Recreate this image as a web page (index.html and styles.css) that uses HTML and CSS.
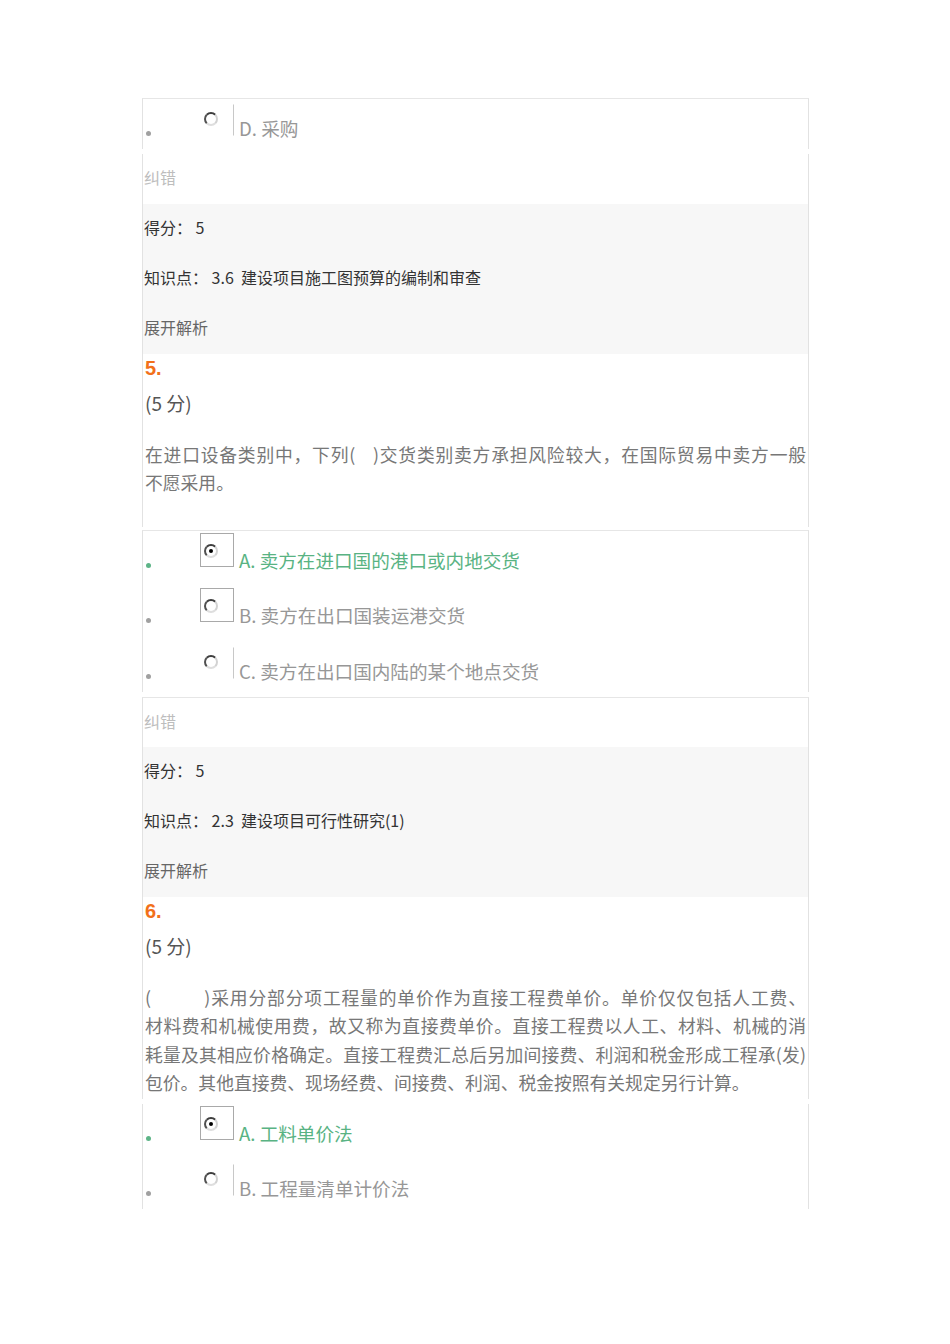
FILE: index.html
```html
<!DOCTYPE html>
<html lang="zh-CN">
<head>
<meta charset="utf-8">
<title>作业</title>
<link rel="stylesheet" href="styles.css">
</head>
<body>
<main class="sheet">
  <ul class="opts">
    <li class="opt">
      <span class="dot"></span>
      <span class="box box--open"><span class="radio"></span></span>
      <span class="opt-text">D. 采购</span>
    </li>
  </ul>
  <div class="report">纠错</div>
  <div class="meta">
    <div class="meta-row">得分： 5</div>
    <div class="meta-row">知识点： 3.6&nbsp; 建设项目施工图预算的编制和审查</div>
    <div class="meta-row meta-row--link">展开解析</div>
  </div>

  <section class="q q--tall">
    <div class="q-num">5.</div>
    <div class="q-score">(5 分)</div>
    <p class="q-text">
      <span class="ln">在进口设备类别中，下列(&emsp;)交货类别卖方承担风险较大，在国际贸易中卖方一般</span>
      <span class="ln-end">不愿采用。</span>
    </p>
  </section>
  <ul class="opts">
    <li class="opt opt--ok">
      <span class="dot"></span>
      <span class="box"><span class="radio radio--on"></span></span>
      <span class="opt-text">A. 卖方在进口国的港口或内地交货</span>
    </li>
    <li class="opt">
      <span class="dot"></span>
      <span class="box"><span class="radio"></span></span>
      <span class="opt-text">B. 卖方在出口国装运港交货</span>
    </li>
    <li class="opt">
      <span class="dot"></span>
      <span class="box box--open"><span class="radio"></span></span>
      <span class="opt-text">C. 卖方在出口国内陆的某个地点交货</span>
    </li>
  </ul>
  <div class="report report--ruled">纠错</div>
  <div class="meta">
    <div class="meta-row">得分： 5</div>
    <div class="meta-row">知识点： 2.3&nbsp; 建设项目可行性研究(1)</div>
    <div class="meta-row meta-row--link">展开解析</div>
  </div>

  <section class="q q--short">
    <div class="q-num">6.</div>
    <div class="q-score">(5 分)</div>
    <p class="q-text">
      <span class="ln">(&emsp;&emsp;&emsp;)采用分部分项工程量的单价作为直接工程费单价。单价仅仅包括人工费、</span>
      <span class="ln">材料费和机械使用费，故又称为直接费单价。直接工程费以人工、材料、机械的消</span>
      <span class="ln">耗量及其相应价格确定。直接工程费汇总后另加间接费、利润和税金形成工程承(发)</span>
      <span class="ln-end">包价。其他直接费、现场经费、间接费、利润、税金按照有关规定另行计算。</span>
    </p>
  </section>
  <ul class="opts opts--open">
    <li class="opt opt--ok">
      <span class="dot"></span>
      <span class="box"><span class="radio radio--on"></span></span>
      <span class="opt-text">A. 工料单价法</span>
    </li>
    <li class="opt">
      <span class="dot"></span>
      <span class="box box--open"><span class="radio"></span></span>
      <span class="opt-text">B. 工程量清单计价法</span>
    </li>
  </ul>
</main>
</body>
</html>
```

FILE: styles.css
```css
* {
  box-sizing: border-box;
}

html,
body {
  margin: 0;
  background: #ffffff;
}

body {
  font-family: "Noto Sans CJK SC", "Liberation Sans", sans-serif;
  color: #333333;
}

.sheet {
  width: 667px;
  margin-left: 142px;
  padding-top: 98px;
  padding-bottom: 120px;
}

/* option lists */
.opts {
  list-style: none;
  margin: 0 0 5px;
  padding: 0;
  border-left: 1px solid #e2e2e2;
  border-right: 1px solid #e2e2e2;
  border-top: 1px solid #e6e6e6;
}

.opts--open {
  border-top: 0;
}

.opt {
  display: flex;
  align-items: flex-start;
  height: 55.5px;
}

.opt:last-child {
  height: 50px;
}

.dot {
  flex: none;
  width: 5px;
  height: 5px;
  margin: 32px 0 0 3px;
  border-radius: 50%;
  background: #a0a0a0;
}

.box {
  flex: none;
  width: 34px;
  height: 34px;
  margin: 2px 0 0 49px;
  padding: 10px 0 0 3px;
  border: 1px solid #a9a9a9;
}

.box--open {
  height: 32px;
  margin-top: 5px;
  padding-top: 7px;
  border-color: transparent #c8c8c8 transparent transparent;
}

.radio {
  display: flex;
  align-items: center;
  justify-content: center;
  width: 14px;
  height: 14px;
  border-radius: 50%;
  border: 2.5px solid;
  border-color: #3e3e3e #d2d2d2 #dedede #505050;
  background: #ffffff;
}

.radio--on::after {
  content: "";
  width: 4px;
  height: 4px;
  border-radius: 50%;
  background: #000000;
}

.opt-text {
  margin: 17px 0 0 5px;
  font-size: 18.6px;
  line-height: 24px;
  color: #979797;
  white-space: nowrap;
}

.opt--ok .dot {
  background: #5db487;
}

.opt--ok .opt-text {
  color: #59b383;
}

/* report / meta */
.report {
  height: 50px;
  padding-left: 1px;
  font-size: 16px;
  line-height: 46px;
  color: #bdbdbd;
  border-left: 1px solid #e2e2e2;
  border-right: 1px solid #e2e2e2;
}

.report--ruled {
  border-top: 1px solid #e6e6e6;
}

.meta {
  background: #f7f7f7;
  border-left: 1px solid #e2e2e2;
  border-right: 1px solid #e2e2e2;
}

.meta-row {
  height: 50px;
  padding-left: 1px;
  font-size: 16px;
  line-height: 46px;
  color: #333333;
  white-space: nowrap;
}

.meta-row--link {
  color: #666666;
}

/* question */
.q {
  padding: 0 2px;
  border-left: 1px solid #e2e2e2;
  border-right: 1px solid #e2e2e2;
}

.q--tall {
  padding-bottom: 29px;
  margin-bottom: 3px;
}

.q--short {
  padding-bottom: 1px;
  margin-bottom: 5px;
}

.q-num {
  height: 28px;
  font-family: "Liberation Sans", "DejaVu Sans", sans-serif;
  font-weight: bold;
  font-size: 20px;
  line-height: 28px;
  color: #f2701a;
}

.q-score {
  margin-top: 8px;
  font-size: 19px;
  line-height: 26px;
  height: 28px;
  color: #555555;
}

.q-text {
  margin: 21.75px 0 0;
  padding-bottom: 1px;
  font-size: 17.8px;
  line-height: 28.5px;
  color: #777777;
}

.ln {
  display: block;
  white-space: nowrap;
  text-align: justify;
  text-align-last: justify;
}

.ln-end {
  display: block;
  white-space: nowrap;
}
```
